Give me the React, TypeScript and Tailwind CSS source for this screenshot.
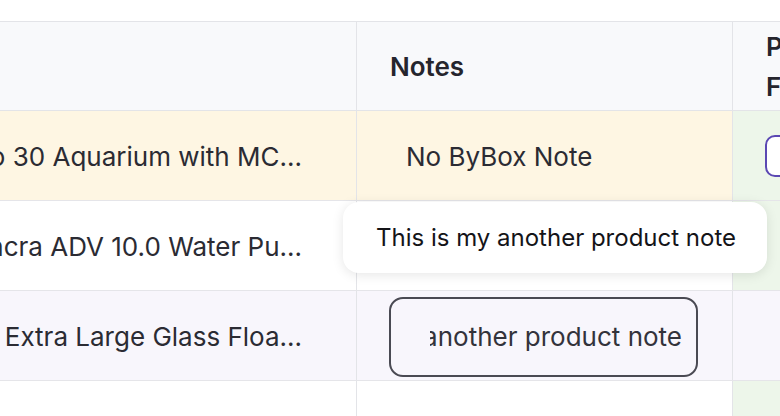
import React from 'react';

const rows = [
  { name: 'Fluval Evo 30 Aquarium with MC...', bg: 'bg-[#fef6e3]', side: 'bg-[#edf6ea]', note: 'No ByBox Note', mode: 'plain' },
  { name: 'Sicce Syncra ADV 10.0 Water Pu...', bg: 'bg-white', side: 'bg-[#edf6ea]', note: '', mode: 'empty' },
  { name: 'Fluval Extra Large Glass Floa...', bg: 'bg-[#f8f6fc]', side: 'bg-[#f8f6fc]', note: 'is my another product note', mode: 'focused' },
  { name: '', bg: 'bg-white', side: 'bg-[#edf6ea]', note: '', mode: 'empty' },
];

export default function App() {
  return (
    <div className="relative w-[780px] h-[416px] overflow-hidden bg-white font-['Inter',sans-serif] text-[26px] text-[#2b2b33]">
      <div className="h-[21px]" />
      <div className="border-t border-[#e3e4e8]">
        {/* Header */}
        <div className="flex h-[89px] border-b border-[#e3e4e8] bg-[#f8f9fb]">
          <div className="w-[357px] shrink-0 border-r border-[#e3e4e8]" />
          <div className="w-[376px] shrink-0 border-r border-[#e3e4e8] flex items-center pl-[33px] font-semibold text-[#25252d]">
            Notes
          </div>
          <div className="flex-1 flex flex-col justify-center pl-[33px] pt-[2px] font-semibold leading-[40px] text-[#25252d] whitespace-nowrap">
            <span>Product</span>
            <span>Features</span>
          </div>
        </div>

        {rows.map((row, i) => (
          <div key={i} className={`flex h-[90px] border-b border-[#e5e5e9] ${row.bg}`}>
            <div className="w-[357px] shrink-0 border-r border-[#e3e4e8] flex items-center justify-end pr-[54px] pt-[2px] overflow-hidden whitespace-nowrap">
              {row.name}
            </div>
            <div className="w-[376px] shrink-0 border-r border-[#e3e4e8] flex items-center pl-[32px] pt-[2px]">
              {row.mode === 'plain' && (
                <div className="border-2 border-transparent pl-[15px]">{row.note}</div>
              )}
              {row.mode === 'focused' && (
                <div className="w-[309px] h-[80px] border-2 border-[#4a4a53] rounded-[14px] flex items-center pl-[39px] pr-[14px]">
                  <div className="flex-1 overflow-hidden whitespace-nowrap flex justify-end text-[#33333b]">
                    {row.note}
                  </div>
                </div>
              )}
            </div>
            <div className={`flex-1 flex items-center pl-[32px] ${row.side}`}>
              {i === 0 && (
                <div className="w-[48px] h-[42px] shrink-0 rounded-[10px] border-2 border-[#5b48b3] bg-white" />
              )}
            </div>
          </div>
        ))}
      </div>

      {/* Tooltip */}
      <div className="absolute left-[343px] top-[202px] w-[424px] h-[71px] rounded-[16px] bg-white shadow-[0_2px_12px_rgba(0,0,0,0.10)] flex items-center pl-[33px] text-[24px] text-[#141418] whitespace-nowrap">
        This is my another product note
      </div>
    </div>
  );
}
